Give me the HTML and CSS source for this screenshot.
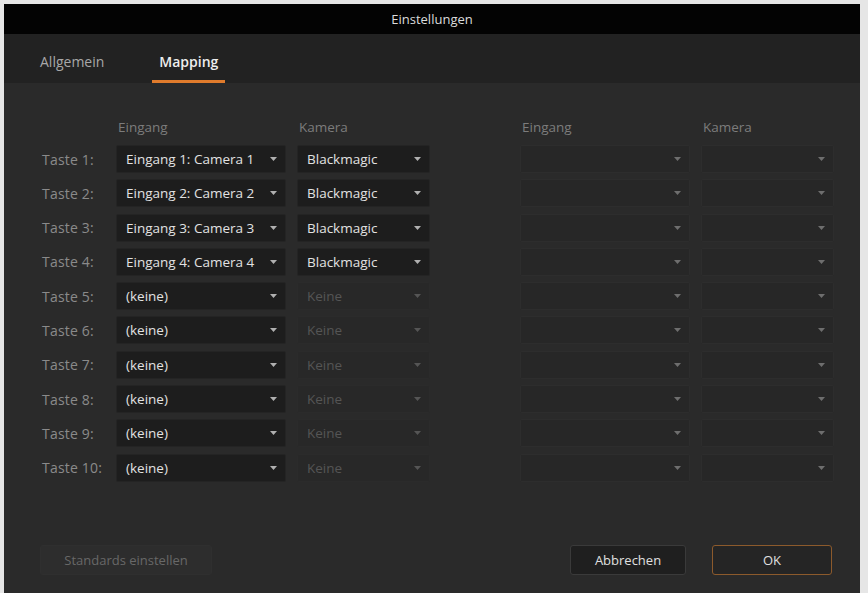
FILE: index.html
```html
<!DOCTYPE html>
<html lang="de">
<head>
    <meta charset="UTF-8">
    <meta name="viewport" content="width=device-width, initial-scale=1.0">
    <title>Einstellungen</title>
    <link rel="stylesheet" href="styles.css">
</head>
<body>
<div class="window">
    <div class="titlebar">Einstellungen</div>
    <div class="tabs">
        <span class="tab">Allgemein</span>
        <span class="tab active">Mapping</span>
    </div>

    <div class="content">
        <div class="mapping">
            <span></span>
            <span class="head">Eingang</span>
            <span class="head">Kamera</span>
            <span></span>
            <span class="head">Eingang</span>
            <span class="head">Kamera</span>
        </div>
        <div class="mapping" id="rows"></div>
    </div>

    <div class="footer">
        <button class="btn disabled">Standards einstellen</button>
        <span class="spacer"></span>
        <button class="btn">Abbrechen</button>
        <button class="btn ok">OK</button>
    </div>
</div>

<script>
    // Zeilen erzeugen
    var inputs = ["Eingang 1: Camera 1", "Eingang 2: Camera 2", "Eingang 3: Camera 3", "Eingang 4: Camera 4"];
    var rows = document.getElementById("rows");
    var arrow = '<svg class="arrow" width="7" height="4" viewBox="0 0 7 4"><path d="M0 0h7L3.5 4z"/></svg>';

    function select(text, cls) {
        return '<div class="select ' + (cls || "") + '"><span>' + text + '</span>' + arrow + '</div>';
    }

    for (var i = 1; i <= 10; i++) {
        var html = '<span class="label">Taste ' + i + ':</span>';
        if (i <= 4) {
            html += select(inputs[i - 1]);
            html += select("Blackmagic");
        } else {
            html += select("(keine)");
            html += select("Keine", "off");
        }
        html += '<span></span>';
        html += select("", "empty");
        html += select("", "empty");
        rows.innerHTML += html;
    }
</script>
</body>
</html>
```

FILE: styles.css
```css
html, body {
    margin: 0;
    height: 100%;
}
body {
    background-color: #e6e6e6;
    font-family: "Open Sans", "Liberation Sans", sans-serif;
    font-size: 13px;
    padding: 4px 8px 0 4px;
    box-sizing: border-box;
}
.window {
    height: 100%;
    background-color: #2a2a2a;
    display: flex;
    flex-direction: column;
}
.titlebar {
    height: 30px;
    line-height: 30px;
    background-color: #030303;
    color: #dcdcdc;
    text-align: center;
    font-size: 13px;
}
.tabs {
    height: 49px;
    background-color: #222222;
    display: flex;
    gap: 44px;
    padding-left: 32px;
}
.tab {
    color: #a8a8a8;
    font-size: 14px;
    line-height: 18px;
    padding: 19px 4px 0;
    height: 27px;
    border-bottom: 3px solid transparent;
}
.tab.active {
    color: #eeeeee;
    font-weight: 600;
    padding: 19px 7px 0;
    border-bottom-color: #e07b2c;
}
.content {
    padding: 35px 0 0 34px;
}
.mapping {
    display: grid;
    grid-template-columns: 67px 170px 133px 68px 170px 133px;
    column-gap: 11px;
    row-gap: 6.3px;
    align-items: center;
}
.mapping + .mapping {
    margin-top: 9px;
}
.head {
    color: #7c7c7c;
    font-size: 13.5px;
    padding-left: 2px;
}
.label {
    color: #8a8a8a;
    font-size: 14px;
    letter-spacing: 0.2px;
    padding-left: 4px;
    white-space: nowrap;
}
.select {
    height: 28px;
    background-color: #1d1d1d;
    border: 1px solid #242424;
    border-radius: 2px;
    box-sizing: border-box;
    display: flex;
    align-items: center;
    justify-content: space-between;
    padding: 0 8px 0 9px;
    color: #e2e2e2;
    font-size: 13.5px;
    white-space: nowrap;
}
.arrow {
    fill: #b0b0b0;
    flex-shrink: 0;
}
.select.off {
    background-color: #282828;
    border-color: #2b2b2b;
    color: #555555;
}
.select.off .arrow {
    fill: #555555;
}
.select.empty {
    background-color: #272727;
    border-color: #2d2d2d;
}
.select.empty .arrow {
    fill: #6e6e6e;
}
.footer {
    margin-top: auto;
    display: flex;
    gap: 26px;
    padding: 0 28px 18px 36px;
}
.spacer {
    flex: 1;
}
.btn {
    height: 30px;
    font-family: inherit;
    font-size: 13px;
    background-color: #1f1f1f;
    color: #e0e0e0;
    border: 1px solid #3a3a3a;
    border-radius: 3px;
    width: 116px;
}
.btn.disabled {
    width: 172px;
    background-color: #2d2d2d;
    border-color: #2f2f2f;
    color: #686868;
}
.btn.ok {
    width: 120px;
    background-color: #252525;
    border-color: #8c5a2c;
}
```
